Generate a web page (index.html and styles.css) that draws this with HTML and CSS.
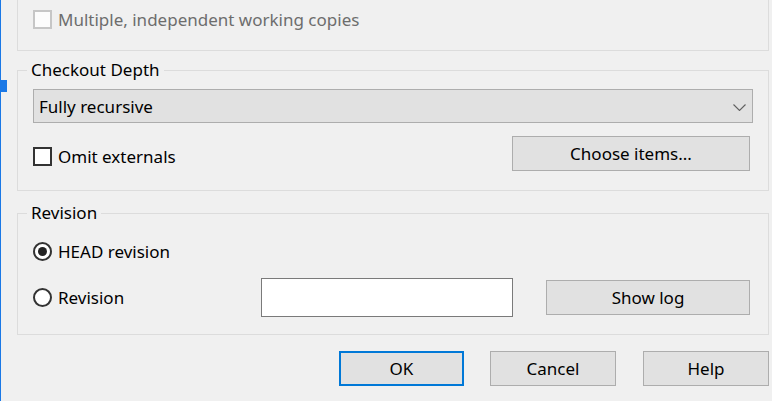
FILE: index.html
```html
<!DOCTYPE html>
<html>
<head>
<meta charset="utf-8">
<link rel="stylesheet" href="styles.css">
</head>
<body>
<div class="dialog">
  <span class="edge-grip"></span>
  <div class="group group-top">
    <label class="check disabled"><span class="box"></span>Multiple, independent working copies</label>
  </div>
  <fieldset class="group depth">
    <legend>Checkout Depth</legend>
    <div class="combo"><span>Fully recursive</span><svg class="chev" width="13" height="7" viewBox="0 0 13 7"><polyline points="0.5,0.5 6.5,6.5 12.5,0.5" fill="none" stroke="#606060" stroke-width="1.1"/></svg></div>
    <div class="depth-row">
      <label class="check omit"><span class="box"></span>Omit externals</label>
      <button class="btn choose">Choose items...</button>
    </div>
  </fieldset>
  <fieldset class="group revision">
    <legend>Revision</legend>
    <label class="radio head"><span class="dot checked"></span>HEAD revision</label>
    <div class="rev-row">
      <label class="radio"><span class="dot"></span>Revision</label>
      <div class="input"></div>
      <button class="btn showlog">Show log</button>
    </div>
  </fieldset>
  <div class="actions">
    <button class="btn ok">OK</button>
    <button class="btn">Cancel</button>
    <button class="btn help">Help</button>
  </div>
</div>
</body>
</html>
```
FILE: styles.css
```css
html, body {
  margin: 0;
  height: 100%;
}
body {
  background: #f0f0f0;
  overflow: hidden;
  font-family: "Noto Sans", "Open Sans", sans-serif;
  font-size: 17px;
  color: #000;
}
.dialog {
  position: relative;
  height: 401px;
  box-sizing: border-box;
  border-left: 1px solid #1a78e6;
  padding: 0 3px 0 16px;
}
.edge-grip {
  position: absolute;
  left: -1px;
  top: 80px;
  width: 7px;
  height: 12px;
  background: #1a78e6;
}
.group {
  border: 1px solid #dcdcdc;
  margin: 0;
  box-sizing: border-box;
  min-inline-size: 0;
}
.group-top {
  border-top: none;
  padding: 10px 15px 21px;
}
.group legend {
  padding: 0 4px;
  margin-left: -6px;
  line-height: 20px;
  font-size: 17px;
}
.depth {
  margin-top: 9px;
  padding: 9px 15px 19px;
}
.revision {
  margin-top: 12px;
  padding: 17px 15px 17px;
}
.check, .radio {
  display: flex;
  align-items: center;
  gap: 6px;
  height: 19px;
  white-space: nowrap;
}
.radio {
  height: 22px;
}
.box {
  width: 19px;
  height: 19px;
  box-sizing: border-box;
  border: 2px solid #333;
  background: #fff;
  flex: none;
}
.check.disabled {
  color: #6d6d6d;
}
.check.disabled .box {
  border-color: #c6c6c6;
  background: #fcfcfc;
}
.dot {
  width: 19px;
  height: 19px;
  box-sizing: border-box;
  border: 2px solid #333;
  border-radius: 50%;
  background: #fff;
  display: grid;
  place-items: center;
  flex: none;
}
.dot.checked::after {
  content: "";
  width: 9px;
  height: 9px;
  border-radius: 50%;
  background: #222;
}
.combo {
  height: 34px;
  box-sizing: border-box;
  border: 1px solid #adadad;
  background: #e1e1e1;
  display: flex;
  align-items: center;
  justify-content: space-between;
  padding: 1px 6px 0 5px;
}
.chev {
  margin-top: 1px;
}
.depth-row {
  display: flex;
  justify-content: space-between;
  align-items: flex-start;
  margin-top: 13px;
}
.omit {
  margin-top: 11px;
}
.btn {
  font-family: inherit;
  font-size: 17px;
  color: #000;
  height: 35px;
  box-sizing: border-box;
  border: 1px solid #adadad;
  background: #e1e1e1;
  padding: 0;
  margin: 0;
  border-radius: 0;
}
.choose {
  width: 238px;
  margin-right: 3px;
}
.rev-row {
  display: grid;
  grid-template-columns: 228px 252px 1fr;
  align-items: center;
  margin-top: 16px;
}
.input {
  height: 39px;
  box-sizing: border-box;
  border: 1px solid #7a7a7a;
  background: #fff;
}
.showlog {
  width: 204px;
  justify-self: end;
  margin-right: 3px;
}
.actions {
  display: flex;
  justify-content: flex-end;
  gap: 26px;
  margin-top: 16px;
}
.actions .btn {
  width: 126px;
}
.actions .ok {
  width: 125px;
  border: 2px solid #0078d7;
}
.actions .help {
  margin-left: 1px;
}
```
